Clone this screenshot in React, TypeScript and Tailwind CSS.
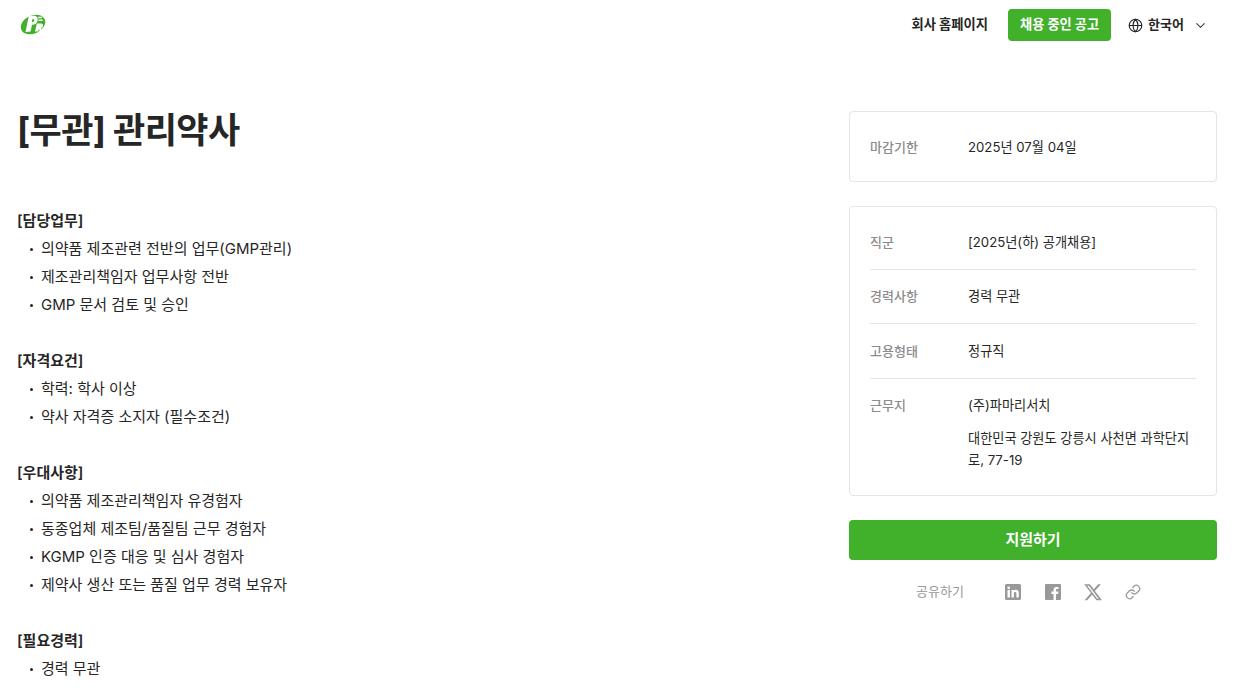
import React from "react";
import { ChevronDown, Globe, Link } from "lucide-react";

const font = "font-['Inter','Noto_Sans_CJK_KR',sans-serif]";

const sections = [
  { title: "[담당업무]", items: ["의약품 제조관련 전반의 업무(GMP관리)", "제조관리책임자 업무사항 전반", "GMP 문서 검토 및 승인"] },
  { title: "[자격요건]", items: ["학력: 학사 이상", "약사 자격증 소지자 (필수조건)"] },
  { title: "[우대사항]", items: ["의약품 제조관리책임자 유경험자", "동종업체 제조팀/품질팀 근무 경험자", "KGMP 인증 대응 및 심사 경험자", "제약사 생산 또는 품질 업무 경력 보유자"] },
  { title: "[필요경력]", items: ["경력 무관"] },
];

function Logo() {
  return (
    <svg width="28" height="22" viewBox="0 0 28 22">
      <ellipse cx="14" cy="10.5" rx="12.8" ry="9" transform="rotate(-25 14 10.5)" fill="#41b02b" />
      <path d="M6.5 18 L9.8 1.8 H15.5 Q19.4 2.4 18.6 6.6 Q17.8 10.8 13 10.8 L11.6 17.6 Z" fill="#fff" />
      <path d="M13.4 5 L12.8 8 Q15 8 15.3 6.4 Q15.5 5 13.4 5 Z" fill="#41b02b" />
      <path d="M16 17.6 L17.9 9.6 H22.4 Q24.6 10 24 12.2 Q23.6 13.6 22.2 14 L23 17 H20.6 L20 14.4 L19.2 17.6 Z" fill="#fff" />
      <path d="M19.2 2.8 h3.8 v1.4 h-3.8 z M19.4 5.6 h4.2 v1.4 h-4.2 z" fill="#fff" />
    </svg>
  );
}

function Row({ label, children, className }: { label: string; children: React.ReactNode; className: string }) {
  return (
    <div className={`flex ${className}`}>
      <div className="w-[98px] shrink-0 text-[13px] leading-[20px] font-medium text-[#8c8c8c]">{label}</div>
      <div className="flex-1 text-[13.2px] leading-[20px] text-[#262626]">{children}</div>
    </div>
  );
}

export default function App() {
  return (
    <div className={`${font} h-[695px] overflow-hidden bg-white text-[#262626]`}>
      <header className="flex h-[50px] items-center justify-between pl-[19px] pr-[34px]">
        <Logo />
        <div className="flex items-center">
          <span className="text-[13.3px] font-bold text-[#262626]">회사 홈페이지</span>
          <span className="ml-[20px] flex h-[32px] items-center rounded-[4px] bg-[#41b02b] px-[12px] text-[13.2px] font-bold text-white">채용 중인 공고</span>
          <span className="ml-[17px] flex items-center text-[13px] font-bold">
            <Globe size={15} strokeWidth={1.8} className="mr-[5px]" />
            한국어
            <ChevronDown size={15} strokeWidth={1.8} className="ml-[9px] text-[#444]" />
          </span>
        </div>
      </header>
      <main className="flex pl-[17px] pr-[25px] pt-[61px]">
        <div className="flex-1">
          <h1 className="text-[35px] leading-[38px] font-bold tracking-[-0.6px]">[무관] 관리약사</h1>
          <div className="mt-[58px] text-[15px] leading-[28px]">
            {sections.map((s) => (
              <div key={s.title} className="mb-[28px]">
                <div className="font-semibold">{s.title}</div>
                <ul>
                  {s.items.map((i) => (
                    <li key={i} className="flex">
                      <span className="flex w-[24px] items-center pl-[13px]"><span className="size-[3px] rounded-full bg-[#262626]" /></span>
                      {i}
                    </li>
                  ))}
                </ul>
              </div>
            ))}
          </div>
        </div>
        <aside className="w-[368px] shrink-0">
          <div className="flex h-[71px] items-center rounded-[4px] border border-[#e5e5e5] px-[20px] pt-[2px]">
            <div className="w-[98px] text-[13px] font-medium text-[#8c8c8c]">마감기한</div>
            <div className="text-[13.2px]">2025년 07월 04일</div>
          </div>
          <div className="mt-[24px] rounded-[4px] border border-[#e5e5e5] px-[20px] pt-[8px] pb-[8px]">
            <Row label="직군" className="border-b border-[#e5e5e5] pt-[17px] pb-[17px]">[2025년(하) 공개채용]</Row>
            <Row label="경력사항" className="border-b border-[#e5e5e5] pt-[16px] pb-[17px]">경력 무관</Row>
            <Row label="고용형태" className="border-b border-[#e5e5e5] pt-[17px] pb-[17px]">정규직</Row>
            <Row label="근무지" className="pt-[16px] pb-[16px]">
              <div>(주)파마리서치</div>
              <div className="mt-[12px] leading-[22px]">대한민국 강원도 강릉시 사천면 과학단지로, 77-19</div>
            </Row>
          </div>
          <button className="mt-[24px] flex h-[40px] w-full items-center justify-center rounded-[4px] bg-[#41b02b] text-[15px] font-semibold text-white">지원하기</button>
          <div className="mt-[22px] flex h-[20px] items-center pl-[67px] text-[#999]">
            <span className="w-[89px] text-[13px]">공유하기</span>
            <svg width="16" height="16" viewBox="0 0 16 16" fill="#999"><path d="M1.5 0h13A1.5 1.5 0 0 1 16 1.5v13a1.5 1.5 0 0 1-1.5 1.5h-13A1.5 1.5 0 0 1 0 14.5v-13A1.5 1.5 0 0 1 1.5 0ZM2.5 6v7.5h2.4V6ZM3.7 2.4a1.4 1.4 0 1 0 0 2.8 1.4 1.4 0 0 0 0-2.8ZM6.5 6v7.5h2.4V9.6c0-1 .4-1.7 1.3-1.7s1.2.7 1.2 1.7v3.9h2.4V9.1c0-2.1-1.1-3.3-2.9-3.3-1 0-1.7.5-2 1V6Z" fillRule="evenodd" /></svg>
            <svg className="ml-[24px]" width="16" height="16" viewBox="0 0 16 16" fill="#999"><path d="M1 0h14a1 1 0 0 1 1 1v14a1 1 0 0 1-1 1h-4V10h2.1l.3-2.4H11V6.2c0-.7.2-1.1 1.2-1.1h1.3V3c-.3 0-1-.1-1.9-.1-1.9 0-3.1 1.1-3.1 3.2v1.5H6.4V10h2.1v6H1a1 1 0 0 1-1-1V1a1 1 0 0 1 1-1Z" /></svg>
            <svg className="ml-[23px]" width="19" height="18" viewBox="0 0 24 24" fill="#999"><path d="M18.2 1.5h3.7l-8 9.2 9.4 12.4h-7.4l-5.8-7.6-6.6 7.6H0l8.6-9.8L-.4 1.5h7.6l5.2 6.9 5.8-6.9Zm-1.3 19.4h2L5.8 3.6H3.6l13.3 17.3Z" /></svg>
            <Link className="ml-[22px]" size={16} strokeWidth={1.9} color="#999" />
          </div>
        </aside>
      </main>
    </div>
  );
}
